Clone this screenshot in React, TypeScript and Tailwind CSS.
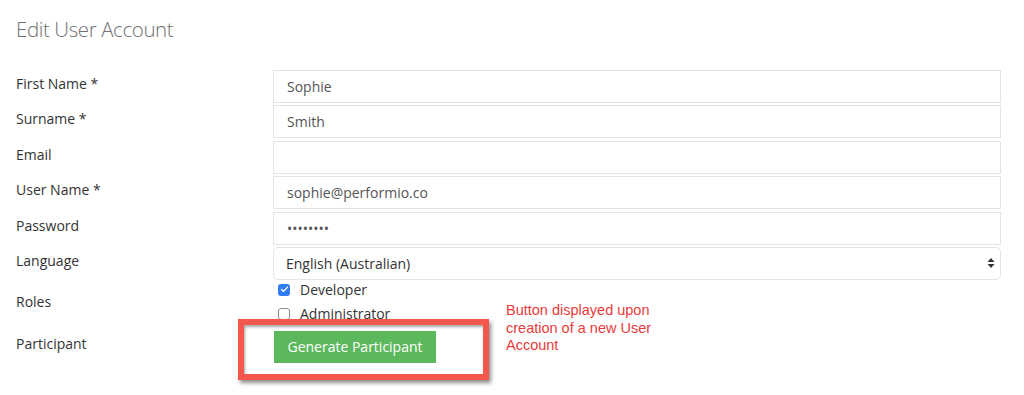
import { Check } from 'lucide-react';

const fields = [
  { label: 'First Name *', value: 'Sophie' },
  { label: 'Surname *', value: 'Smith' },
  { label: 'Email', value: '' },
  { label: 'User Name *', value: 'sophie@performio.co' },
  { label: 'Password', value: '••••••••' },
];

function Field({ label, value }: { label: string; value: string }) {
  return (
    <div className="flex h-[33px]">
      <label className="w-[257px] shrink-0 pt-[4px] text-[14px] leading-[20px] text-[#333]">{label}</label>
      <div className="w-[728px] border border-[#e4e4e4] px-[13px] flex items-center text-[14px] text-[#555]">
        {value}
      </div>
    </div>
  );
}

export default function App() {
  return (
    <div className="relative w-[1024px] h-[395px] bg-white px-[16px] pt-[14px] font-['Open_Sans',sans-serif]">
      <h1 className="text-[20.5px] leading-[30px] font-light text-[#707070] tracking-[-0.4px]">Edit User Account</h1>

      <div className="mt-[26px] flex flex-col gap-[2.4px]">
        {fields.map((f) => (
          <Field key={f.label} label={f.label} value={f.value} />
        ))}

        <div className="flex h-[33px]">
          <label className="w-[257px] shrink-0 pt-[4px] text-[14px] leading-[20px] text-[#333]">Language</label>
          <div className="w-[728px] border border-[#e4e4e4] rounded-[5px] pl-[12px] pr-[5px] flex items-center justify-between text-[14px] text-[#333]">
            <span>English (Australian)</span>
            <svg width="8" height="12" viewBox="0 0 8 12" className="text-[#333]">
              <path d="M4 1 L7.5 5 L0.5 5 Z" fill="currentColor" />
              <path d="M4 11 L7.5 7 L0.5 7 Z" fill="currentColor" />
            </svg>
          </div>
        </div>
      </div>

      <div className="flex -mt-[2px]">
        <label className="w-[257px] shrink-0 pt-[14px] text-[14px] leading-[20px] text-[#333]">Roles</label>
        <div className="flex flex-col pl-[5px] text-[14px] text-[#333]">
          <div className="flex items-center h-[24px] gap-[10px]">
            <span className="w-[12px] h-[12px] rounded-[3px] bg-[#2f7cf6] flex items-center justify-center">
              <Check className="w-[9px] h-[9px] text-white" strokeWidth={3.5} />
            </span>
            <span>Developer</span>
          </div>
          <div className="flex items-center h-[24px] gap-[10px]">
            <span className="w-[12px] h-[12px] rounded-[3px] border border-[#8e8e8e] bg-white" />
            <span>Administrator</span>
          </div>
        </div>
      </div>

      <div className="flex mt-[5px]">
        <label className="w-[257px] shrink-0 pt-[3px] text-[14px] leading-[20px] text-[#333]">Participant</label>
        <button className="h-[32px] w-[162px] ml-[1px] bg-[#5cb85c] text-white text-[14px]">Generate Participant</button>
      </div>

      <div className="absolute left-[238px] top-[319px] w-[251px] h-[61px] border-[6px] border-[#f4574c] shadow-[2px_3px_4px_rgba(0,0,0,0.45),inset_1px_2px_3px_rgba(0,0,0,0.35)]" />

      <p className="absolute left-[506px] top-[302px] text-[14.5px] leading-[17.5px] text-[#ea3b3b] font-['Liberation_Sans',Arial,sans-serif]">
        Button displayed upon
        <br />
        creation of a new User
        <br />
        Account
      </p>
    </div>
  );
}
